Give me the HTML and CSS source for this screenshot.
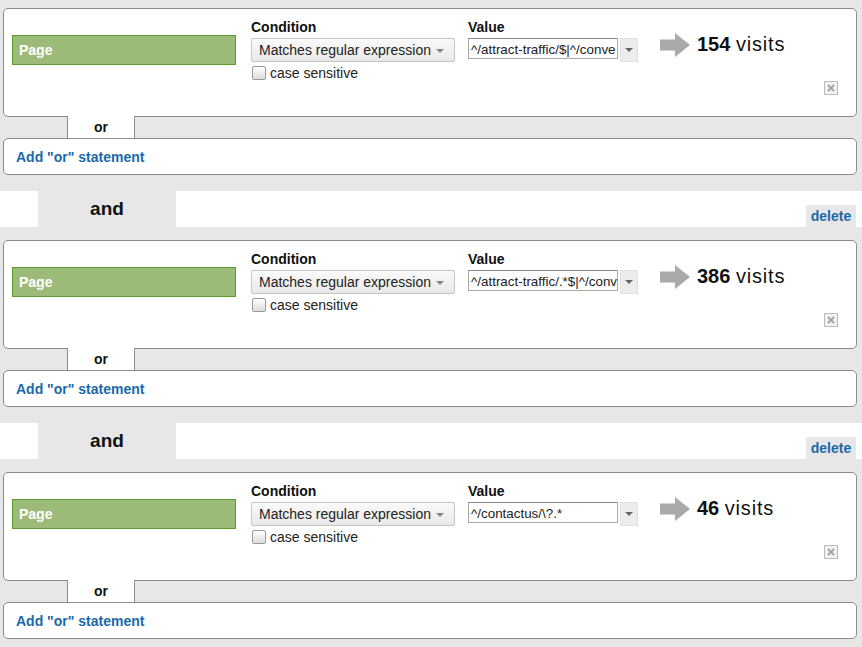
FILE: index.html
```html
<!DOCTYPE html>
<html>
<head>
  <meta charset="UTF-8">
  <title>Segment conditions</title>
  <link rel="stylesheet" href="styles.css">
</head>
<body>
  <div class="block">
    <div class="card">
      <div class="field">Page</div>
      <div class="cond">
        <div class="label">Condition</div>
        <div class="select">Matches regular expression<span class="caret"></span></div>
        <div class="check"><span class="box"></span>case sensitive</div>
      </div>
      <div class="value">
        <div class="label">Value</div>
        <div class="value-row">
          <div class="input">^/attract-traffic/$|^/conve</div>
          <div class="drop"><span class="caret"></span></div>
        </div>
      </div>
      <div class="result">
        <div class="count">
          <svg class="arrow" width="30" height="24" viewBox="0 0 30 24"><path d="M0 6.5H15V0L30 12L15 24V17.5H0Z" fill="#aaa"/></svg>
          <span class="num"><b>154</b> <span class="unit">visits</span></span>
        </div>
        <svg class="close" width="14" height="14" viewBox="0 0 14 14"><rect x="0.5" y="0.5" width="13" height="13" fill="#f2f2f2" stroke="#bbb"/><path d="M4 4L10 10M10 4L4 10" stroke="#a5a5a5" stroke-width="2"/></svg>
      </div>
    </div>
    <div class="or-row"><div class="or-tab">or</div></div>
    <div class="add-or">Add "or" statement</div>
  </div>
  <div class="and-row"><div class="and-tab">and</div><div class="spacer"></div><div class="delete">delete</div></div>

  <div class="block">
    <div class="card">
      <div class="field">Page</div>
      <div class="cond">
        <div class="label">Condition</div>
        <div class="select">Matches regular expression<span class="caret"></span></div>
        <div class="check"><span class="box"></span>case sensitive</div>
      </div>
      <div class="value">
        <div class="label">Value</div>
        <div class="value-row">
          <div class="input">^/attract-traffic/.*$|^/conv</div>
          <div class="drop"><span class="caret"></span></div>
        </div>
      </div>
      <div class="result">
        <div class="count">
          <svg class="arrow" width="30" height="24" viewBox="0 0 30 24"><path d="M0 6.5H15V0L30 12L15 24V17.5H0Z" fill="#aaa"/></svg>
          <span class="num"><b>386</b> <span class="unit">visits</span></span>
        </div>
        <svg class="close" width="14" height="14" viewBox="0 0 14 14"><rect x="0.5" y="0.5" width="13" height="13" fill="#f2f2f2" stroke="#bbb"/><path d="M4 4L10 10M10 4L4 10" stroke="#a5a5a5" stroke-width="2"/></svg>
      </div>
    </div>
    <div class="or-row"><div class="or-tab">or</div></div>
    <div class="add-or">Add "or" statement</div>
  </div>
  <div class="and-row"><div class="and-tab">and</div><div class="spacer"></div><div class="delete">delete</div></div>

  <div class="block">
    <div class="card">
      <div class="field">Page</div>
      <div class="cond">
        <div class="label">Condition</div>
        <div class="select">Matches regular expression<span class="caret"></span></div>
        <div class="check"><span class="box"></span>case sensitive</div>
      </div>
      <div class="value">
        <div class="label">Value</div>
        <div class="value-row">
          <div class="input">^/contactus/\?.*</div>
          <div class="drop"><span class="caret"></span></div>
        </div>
      </div>
      <div class="result">
        <div class="count">
          <svg class="arrow" width="30" height="24" viewBox="0 0 30 24"><path d="M0 6.5H15V0L30 12L15 24V17.5H0Z" fill="#aaa"/></svg>
          <span class="num"><b>46</b> <span class="unit">visits</span></span>
        </div>
        <svg class="close" width="14" height="14" viewBox="0 0 14 14"><rect x="0.5" y="0.5" width="13" height="13" fill="#f2f2f2" stroke="#bbb"/><path d="M4 4L10 10M10 4L4 10" stroke="#a5a5a5" stroke-width="2"/></svg>
      </div>
    </div>
    <div class="or-row"><div class="or-tab">or</div></div>
    <div class="add-or">Add "or" statement</div>
  </div>
</body>
</html>
```

FILE: styles.css
```css
html {
  background: #e7e7e7;
}
body {
  margin: 0;
  padding-top: 8px;
  font-family: "Liberation Sans", Arial, sans-serif;
  font-size: 14px;
  color: #111;
}
.block {
  margin: 0 5px 16px 3px;
}
.card {
  box-sizing: border-box;
  height: 109px;
  background: #fff;
  border: 1px solid #8c8c8c;
  border-radius: 5px;
  display: flex;
  padding-left: 8px;
}
.field {
  box-sizing: border-box;
  width: 224px;
  height: 30px;
  margin-top: 26px;
  padding-left: 6px;
  background: #9cbb78;
  border: 1px solid #5f9a30;
  color: #fff;
  font-weight: bold;
  line-height: 29px;
}
.label {
  font-weight: bold;
  line-height: 16px;
  margin-top: 10px;
}
.cond {
  margin-left: 15px;
  width: 204px;
}
.select {
  box-sizing: border-box;
  height: 24px;
  margin-top: 3px;
  padding: 1px 0 0 7px;
  border: 1px solid #c4c4c4;
  border-radius: 2px;
  background: linear-gradient(#fafafa, #e9e9e9);
  line-height: 21px;
  display: flex;
  align-items: center;
  white-space: nowrap;
  color: #222;
}
.caret {
  width: 0;
  height: 0;
  border-left: 4px solid transparent;
  border-right: 4px solid transparent;
  border-top: 4px solid #888;
}
.select .caret {
  margin-left: 5px;
}
.check {
  display: flex;
  align-items: center;
  margin-top: 3px;
  line-height: 16px;
  color: #222;
}
.box {
  box-sizing: border-box;
  width: 14px;
  height: 14px;
  margin: 0 4px 0 1px;
  border: 1px solid #999;
  border-radius: 2px;
  background: linear-gradient(#fff, #ddd);
}
.value {
  margin-left: 13px;
}
.value-row {
  display: flex;
  margin-top: 3px;
}
.input {
  box-sizing: border-box;
  width: 150px;
  height: 21px;
  padding: 2px 2px 0;
  border: 1px solid #a8a8a8;
  border-top-color: #8a8a8a;
  font-size: 13.4px;
  line-height: 17px;
  white-space: nowrap;
  overflow: hidden;
  color: #222;
}
.drop {
  width: 18px;
  height: 24px;
  margin-left: 2px;
  background: #ececec;
  border: 1px solid #e0e0e0;
  box-sizing: border-box;
  display: flex;
  justify-content: center;
  align-items: center;
}
.drop .caret {
  border-top-color: #666;
}
.result {
  flex: 1;
  margin-left: 22px;
  display: flex;
  flex-direction: column;
}
.count {
  display: flex;
  align-items: flex-start;
  margin-top: 23px;
}
.arrow {
  margin-top: 1px;
}
.num {
  margin-left: 7px;
  font-size: 20px;
  line-height: 24px;
}
.unit {
  letter-spacing: 0.8px;
}
.close {
  margin-top: auto;
  margin-bottom: 21px;
  margin-right: 18px;
  align-self: flex-end;
}
.or-row {
  display: flex;
  align-items: flex-start;
  height: 21px;
}
.or-tab {
  box-sizing: border-box;
  width: 68px;
  height: 22px;
  margin: -1px 0 0 64px;
  background: #fff;
  border-left: 1px solid #8c8c8c;
  border-right: 1px solid #8c8c8c;
  text-align: center;
  font-weight: bold;
  line-height: 22px;
}
.add-or {
  box-sizing: border-box;
  height: 37px;
  padding: 1px 0 0 12px;
  background: #fff;
  border: 1px solid #8c8c8c;
  border-radius: 5px;
  color: #1b69a8;
  font-weight: bold;
  line-height: 34px;
}
.and-row {
  display: flex;
  height: 36px;
  margin-bottom: 13px;
  background: #fff;
}
.and-tab {
  width: 138px;
  margin-left: 38px;
  background: #e7e7e7;
  text-align: center;
  font-size: 19px;
  font-weight: bold;
  line-height: 36px;
}
.spacer {
  flex: 1;
}
.delete {
  box-sizing: border-box;
  align-self: flex-end;
  width: 50px;
  height: 22px;
  margin-right: 6px;
  padding-top: 1px;
  background: #e7e7e7;
  color: #1b69a8;
  font-weight: bold;
  text-align: center;
  line-height: 21px;
}
```
